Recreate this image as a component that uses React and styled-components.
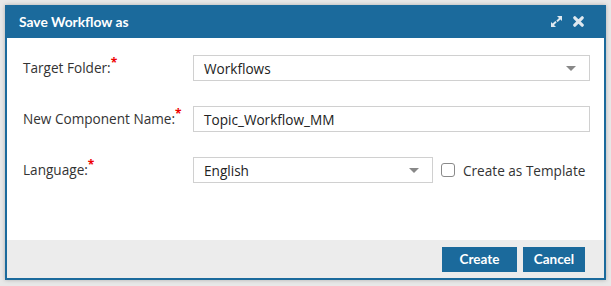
import React from "react";
import styled, { createGlobalStyle } from "styled-components";

const GlobalStyle = createGlobalStyle`
  html, body {
    margin: 0;
    padding: 0;
    background: #e8e8e8;
    font-family: "Open Sans", "Liberation Sans", sans-serif;
  }
`;

const Page = styled.div`
  padding: 5px 5px 6px 5px;
  width: 611px;
  height: 286px;
  box-sizing: border-box;
`;

const Dialog = styled.div`
  width: 601px;
  height: 275px;
  box-sizing: border-box;
  border: 2px solid #1b6a9c;
  background: #fff;
  display: flex;
  flex-direction: column;
  box-shadow: 0 0 4px rgba(0, 0, 0, 0.25);
`;

const Header = styled.div`
  height: 33px;
  background: #1b6a9c;
  display: flex;
  align-items: center;
  justify-content: space-between;
  padding: 0 20px 0 12px;
  margin-top: -2px;
`;

const Title = styled.div`
  color: #fff;
  font-family: Lato, "Open Sans", sans-serif;
  font-size: 13.8px;
  font-weight: 700;
`;

const Tools = styled.div`
  display: flex;
  align-items: center;
  gap: 11px;
`;

const Body = styled.div`
  flex: 1;
  padding: 17px 14px 0 16px;
  display: flex;
  flex-direction: column;
  gap: 25px;
`;

const Row = styled.div`
  display: flex;
  align-items: center;
  height: 26px;
`;

const Label = styled.div`
  width: 170px;
  font-size: 13.6px;
  line-height: 18px;
  color: #333;
`;

const Req = styled.span`
  color: #e00;
  font-size: 12px;
  font-weight: 700;
  line-height: 0;
  vertical-align: 6px;
`;

const Field = styled.div`
  width: ${(p) => p.$w}px;
  height: 26px;
  box-sizing: border-box;
  border: 1px solid #d0d0d0;
  display: flex;
  align-items: center;
  justify-content: space-between;
  padding: 0 13px 0 10px;
  font-size: 13.6px;
  color: #222;
`;

const Caret = styled.span`
  width: 0;
  height: 0;
  border-left: 5px solid transparent;
  border-right: 5px solid transparent;
  border-top: 5px solid #888;
`;

const CheckWrap = styled.label`
  display: flex;
  align-items: center;
  margin-left: 8px;
  gap: 8px;
  font-size: 13.6px;
  color: #333;
`;

const Box = styled.span`
  width: 12px;
  height: 12px;
  border: 1px solid #8a8a8a;
  border-radius: 3px;
  background: #fff;
`;

const Footer = styled.div`
  height: 38px;
  background: #ececec;
  display: flex;
  justify-content: flex-end;
  align-items: center;
  gap: 6px;
  padding: 0 19px 0 0;
`;

const Button = styled.button`
  height: 25px;
  width: ${(p) => p.$w}px;
  border: none;
  background: #1b6a9c;
  color: #fff;
  font-family: Lato, "Open Sans", sans-serif;
  font-weight: 700;
  font-size: 13.5px;
  padding: 0;
`;

const ExpandIcon = () => (
  <svg width="11" height="11" viewBox="0 0 11 11">
    <path d="M6 0h5v5l-1.6-1.6-2.7 2.7-1.4-1.4 2.7-2.7z" fill="#dfe8ef" />
    <path d="M5 11h-5v-5l1.6 1.6 2.7-2.7 1.4 1.4-2.7 2.7z" fill="#dfe8ef" />
  </svg>
);

const CloseIcon = () => (
  <svg width="11" height="11" viewBox="0 0 11 11">
    <path d="M1.8 1.8l7.4 7.4M9.2 1.8l-7.4 7.4" stroke="#dfe8ef" strokeWidth="3.2" strokeLinecap="round" />
  </svg>
);

export default function App() {
  return (
    <>
      <GlobalStyle />
      <Page>
        <Dialog>
          <Header>
            <Title>Save Workflow as</Title>
            <Tools>
              <ExpandIcon />
              <CloseIcon />
            </Tools>
          </Header>
          <Body>
            <Row>
              <Label>
                Target Folder:<Req>*</Req>
              </Label>
              <Field $w={397}>
                Workflows
                <Caret />
              </Field>
            </Row>
            <Row>
              <Label>
                New Component Name:<Req>*</Req>
              </Label>
              <Field $w={397}>Topic_Workflow_MM</Field>
            </Row>
            <Row>
              <Label>
                Language:<Req>*</Req>
              </Label>
              <Field $w={240}>
                English
                <Caret />
              </Field>
              <CheckWrap>
                <Box />
                Create as Template
              </CheckWrap>
            </Row>
          </Body>
          <Footer>
            <Button $w={75}>Create</Button>
            <Button $w={62}>Cancel</Button>
          </Footer>
        </Dialog>
      </Page>
    </>
  );
}
